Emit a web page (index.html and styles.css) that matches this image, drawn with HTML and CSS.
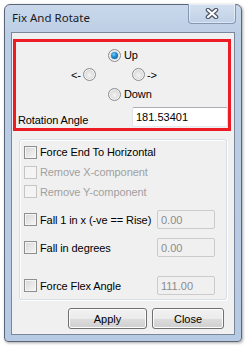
FILE: index.html
```html
<!DOCTYPE html>
<html lang="en">
<head>
  <meta charset="UTF-8">
  <title>Fix And Rotate</title>
  <link rel="stylesheet" href="styles.css">
</head>
<body>
  <div class="window">
    <div class="title-bar">
      <span class="title">Fix And Rotate</span>
      <div class="close-btn">
        <svg width="14" height="11" viewBox="0 0 14 11">
          <path d="M3 2 L11 9 M11 2 L3 9" stroke="#4b5566" stroke-width="4.5" stroke-linecap="round"/>
          <path d="M3 2 L11 9 M11 2 L3 9" stroke="#ffffff" stroke-width="2.2" stroke-linecap="round"/>
        </svg>
      </div>
    </div>

    <div class="client">
      <div class="direction-box">
        <div class="dir-row dir-up">
          <input type="radio" name="dir" class="radio" checked>
          <span class="radio-label">Up</span>
        </div>
        <div class="dir-row dir-mid">
          <div class="dir-left">
            <span>&lt;-</span>
            <input type="radio" name="dir" class="radio">
          </div>
          <div class="dir-right">
            <input type="radio" name="dir" class="radio">
            <span>-&gt;</span>
          </div>
        </div>
        <div class="dir-row dir-up">
          <input type="radio" name="dir" class="radio">
          <span class="radio-label">Down</span>
        </div>
        <div class="angle-row">
          <label class="angle-label">Rotation Angle</label>
          <input type="text" class="textbox angle-input" value="181.53401">
        </div>
      </div>

      <div class="group-box">
        <div class="check-row">
          <input type="checkbox" class="checkbox">
          <span>Force End To Horizontal</span>
        </div>
        <div class="check-row disabled">
          <input type="checkbox" class="checkbox" disabled>
          <span>Remove X-component</span>
        </div>
        <div class="check-row disabled row-tight">
          <input type="checkbox" class="checkbox" disabled>
          <span>Remove Y-component</span>
        </div>
        <div class="check-row value-row">
          <input type="checkbox" class="checkbox">
          <span class="check-text">Fall 1 in x (-ve == Rise)</span>
          <input type="text" class="textbox small-input" value="0.00" disabled>
        </div>
        <div class="check-row value-row">
          <input type="checkbox" class="checkbox">
          <span class="check-text">Fall in degrees</span>
          <input type="text" class="textbox small-input" value="0.00" disabled>
        </div>
        <div class="check-row value-row flex-row">
          <input type="checkbox" class="checkbox">
          <span class="check-text">Force Flex Angle</span>
          <input type="text" class="textbox small-input" value="111.00" disabled>
        </div>
      </div>

      <div class="buttons">
        <button class="btn btn-apply">Apply</button>
        <button class="btn btn-close">Close</button>
      </div>
    </div>
  </div>
</body>
</html>
```

FILE: styles.css
```css
:root {
  --frame-border: #5b6778;
  --client-bg: #f0f0f0;
  --red: #ed1c24;
  --text-color: #000;
  --disabled-text: #a0a0a0;
}

* {
  box-sizing: border-box;
  margin: 0;
  padding: 0;
}

body {
  background-color: #fff;
  font-family: 'Liberation Sans', Arial, sans-serif;
  font-size: 11px;
  letter-spacing: -0.1px;
  color: var(--text-color);
}

.window {
  margin: 4px;
  width: 238px;
  height: 338px;
  border: 1px solid var(--frame-border);
  border-radius: 6px 6px 4px 4px;
  background: linear-gradient(to bottom, #c9d8eb 0, #bccee5 30px, #b7cae3 100%);
  box-shadow: 1px 1px 3px rgba(0, 0, 0, 0.35);
  display: flex;
  flex-direction: column;
}

.title-bar {
  height: 27px;
  display: flex;
  justify-content: space-between;
  align-items: flex-start;
  padding-left: 7px;
}

.title {
  font-family: 'Noto Sans', 'Open Sans', sans-serif;
  font-size: 11.5px;
  letter-spacing: 0;
  color: #1b1b1b;
  margin-top: 5px;
}

.close-btn {
  width: 48px;
  height: 20px;
  margin-right: 5px;
  margin-top: -1px;
  border: 1px solid #8597b1;
  border-top: none;
  border-radius: 0 0 4px 4px;
  background: linear-gradient(to bottom, #d4e0ef, #c0d1e7);
  box-shadow: inset 0 0 0 1px rgba(255, 255, 255, 0.45);
  display: flex;
  align-items: center;
  justify-content: center;
}

.client {
  margin: 0 6px 6px;
  flex: 1;
  border: 1px solid #7a8699;
  background-color: var(--client-bg);
  display: flex;
  flex-direction: column;
}

/* red framed direction area */
.direction-box {
  margin: 6px 3px 0 1px;
  height: 92px;
  border: 3px solid var(--red);
  padding-top: 3px;
}

.dir-row {
  display: flex;
  align-items: center;
  height: 20px;
}

.dir-up {
  padding-left: 92px;
  gap: 3px;
}

.dir-mid {
  height: 19px;
  padding-left: 55px;
  gap: 36px;
}

.dir-left,
.dir-right {
  display: flex;
  align-items: center;
  gap: 2px;
}

.dir-left {
  width: 25px;
  justify-content: space-between;
}

.radio {
  appearance: none;
  width: 13px;
  height: 13px;
  border-radius: 50%;
  border: 1px solid #8b8d8f;
  background: radial-gradient(circle at 50% 55%, #f4f4f4 0, #dcdcdc 55%, #c9c9c9 100%);
  box-shadow: inset 0 0 0 1px #f6f6f6;
  position: relative;
  flex-shrink: 0;
}

.radio:checked::after {
  content: '';
  position: absolute;
  left: 2px;
  top: 2px;
  width: 7px;
  height: 7px;
  border-radius: 50%;
  background: radial-gradient(circle at 40% 35%, #6ed0ff 0, #1c86c9 45%, #0b4f86 100%);
}

.angle-row {
  display: flex;
  justify-content: space-between;
  align-items: center;
  margin-top: 3px;
  padding-left: 2px;
}

.angle-label {
  padding-top: 5px;
}

.textbox {
  height: 20px;
  border: 1px solid;
  border-color: #abadb3 #dbdfe6 #e3e9ef #e2e3ea;
  border-radius: 2px;
  background-color: #fff;
  font-family: 'Liberation Sans', Arial, sans-serif;
  font-size: 11px;
  color: #000;
  padding: 0 3px;
  outline: none;
}

.angle-input {
  width: 96px;
}

/* checkbox group */
.group-box {
  margin: 8px 7px 0;
  width: 208px;
  height: 161px;
  border: 1px solid #d5dfe5;
  border-radius: 3px;
  padding: 2px 0 0 4px;
  box-shadow: inset 1px 1px 0 #fff, 1px 1px 0 #fff;
}

.check-row {
  display: flex;
  align-items: center;
  height: 20px;
  gap: 3px;
}

.row-tight {
  height: 19px;
}

.check-row.disabled {
  color: var(--disabled-text);
}

.value-row {
  height: 19px;
  margin-top: 9px;
}

.flex-row {
  margin-top: 19px;
}

.check-text {
  width: 114px;
}

.checkbox {
  appearance: none;
  width: 13px;
  height: 13px;
  border: 1px solid #8e8f8f;
  background: linear-gradient(to bottom right, #d6d6d6, #f7f7f7);
  box-shadow: inset 0 0 0 1px #f4f4f4;
  flex-shrink: 0;
}

.checkbox:disabled {
  border-color: #c5c5c5;
  background: #f4f4f4;
  box-shadow: none;
}

.small-input {
  width: 58px;
  height: 19px;
  background-color: #f0f0f0;
  border-color: #cbcbcb;
  color: #8c8c8c;
}

/* buttons */
.buttons {
  display: flex;
  gap: 5px;
  margin: 8px 0 0 56px;
}

.btn {
  height: 21px;
  border: 1px solid #707070;
  border-radius: 3px;
  background: linear-gradient(to bottom, #f2f2f2 0, #ebebeb 50%, #dddddd 50%, #cfcfcf 100%);
  box-shadow: inset 0 0 0 1px #fcfcfc;
  font-family: 'Liberation Sans', Arial, sans-serif;
  font-size: 11px;
  color: #000;
}

.btn-apply {
  width: 79px;
}

.btn-close {
  width: 72px;
}
```
